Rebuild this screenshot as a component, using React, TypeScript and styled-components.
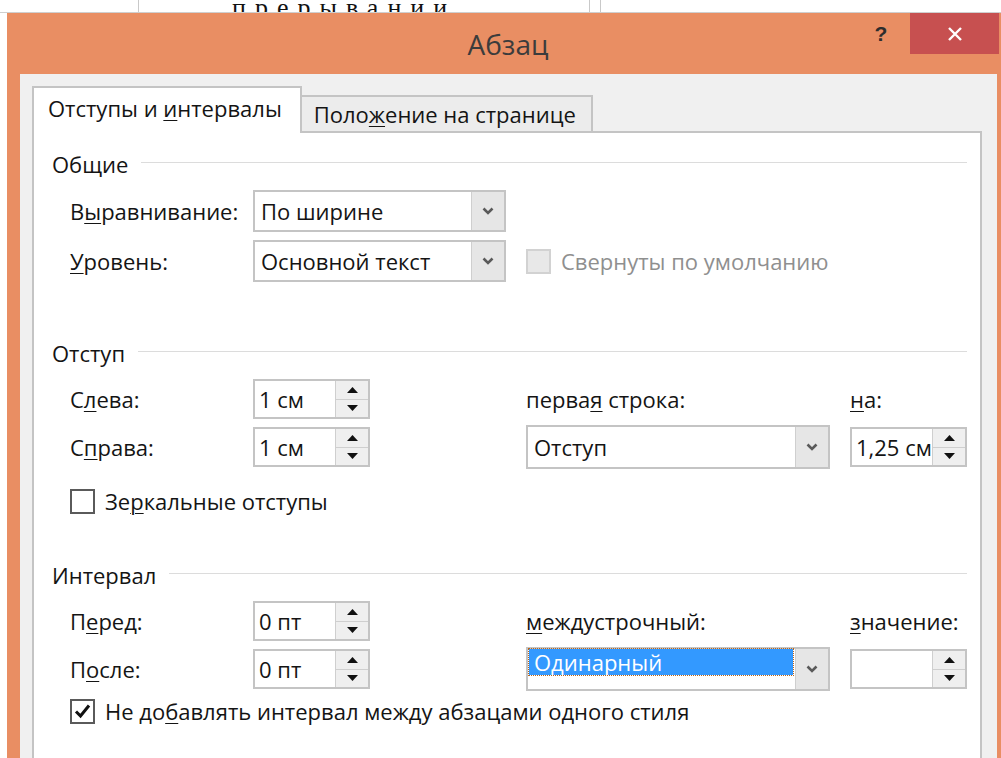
import React from "react";
import styled, { createGlobalStyle } from "styled-components";

const GlobalStyle = createGlobalStyle`
  html, body {
    margin: 0;
    padding: 0;
    background: #ffffff;
  }
  body {
    width: 1001px;
    height: 758px;
    overflow: hidden;
    font-family: "Segoe UI", "Open Sans", "Noto Sans", sans-serif;
    color: #141414;
  }
`;

const Page = styled.div`
  display: flex;
  flex-direction: column;
  height: 758px;
`;

// strip of the document that peeks out above the dialog
const DocStrip = styled.div`
  position: relative;
  height: 12px;
  overflow: hidden;
  border-bottom: 1px solid #cfcfcf;
`;

const DocLine = styled.div`
  position: absolute;
  left: 232px;
  bottom: -11px;
  font-family: "Liberation Serif", serif;
  font-size: 26px;
  letter-spacing: 9px;
  color: #111;
  white-space: nowrap;
`;

const DocRule = styled.div<{ $x: number }>`
  position: absolute;
  top: 0;
  bottom: 0;
  left: ${(p) => p.$x}px;
  width: 1px;
  background: #c9c9c9;
`;

const Window = styled.div`
  flex: 1;
  display: flex;
  flex-direction: column;
  margin-left: 7px;
  background: #e98e63;
`;

const TitleBar = styled.div`
  display: grid;
  grid-template-columns: 1fr auto 1fr;
  height: 61px;
`;

const Title = styled.div`
  grid-column: 2;
  padding: 12px 0 0 8px;
  font-size: 28px;
  color: #3c3c3c;
`;

const Controls = styled.div`
  grid-column: 3;
  justify-self: end;
  display: flex;
  align-items: flex-start;
  margin-right: 2px;
`;

const HelpButton = styled.div`
  width: 42px;
  height: 41px;
  display: flex;
  align-items: center;
  justify-content: center;
  font-family: "Liberation Sans", sans-serif;
  font-weight: bold;
  font-size: 21px;
  color: #2d2d2d;
  margin-right: 8px;
`;

const CloseButton = styled.div`
  width: 89px;
  height: 41px;
  display: flex;
  align-items: center;
  justify-content: center;
  background: #c75050;
`;

const Body = styled.div`
  flex: 1;
  display: flex;
  flex-direction: column;
  margin: 0 4px 0 13px;
  padding: 14px 15px 0 12px;
  background: #f0f0f0;
`;

const Tabs = styled.div`
  display: flex;
  align-items: flex-end;
  height: 45px;
  margin-bottom: -2px;
  position: relative;
  z-index: 1;
`;

const Tab = styled.div<{ $active?: boolean }>`
  box-sizing: border-box;
  display: flex;
  align-items: center;
  height: ${(p) => (p.$active ? 47 : 38)}px;
  padding: ${(p) => (p.$active ? "0 18px 6px 14px" : "0 15px 0 12px")};
  margin-left: ${(p) => (p.$active ? 0 : -2)}px;
  border: 2px solid #c4c4c4;
  border-bottom: ${(p) => (p.$active ? "none" : "2px solid #c4c4c4")};
  background: ${(p) => (p.$active ? "#ffffff" : "#ececec")};
  font-size: 22px;
  white-space: nowrap;
`;

const TabPanel = styled.div`
  flex: 1;
  background: #ffffff;
  border: 2px solid #c4c4c4;
  border-bottom: none;
  padding: 18px 13px 0 18px;
`;

const Section = styled.section<{ $gap: number }>`
  margin-top: ${(p) => p.$gap}px;
`;

const Legend = styled.div`
  display: flex;
  align-items: center;
  gap: 13px;
  height: 26px;
  font-size: 22px;
  &::after {
    content: "";
    flex: 1;
    height: 1px;
    margin-top: -3px;
    background: #dcdcdc;
  }
`;

const Grid = styled.div<{ $rowGap: number }>`
  display: grid;
  grid-template-columns: 183px 273px 324px 117px;
  align-items: center;
  padding-left: 18px;
  margin-top: 13px;
  row-gap: ${(p) => p.$rowGap}px;
`;

const Label = styled.span<{ $muted?: boolean }>`
  font-size: 22px;
  line-height: 28px;
  color: ${(p) => (p.$muted ? "#8f8f8f" : "#141414")};
  white-space: nowrap;
`;

const Key = styled.u`
  text-underline-offset: 3px;
  text-decoration-thickness: 1px;
`;

const SelectBox = styled.div<{ $width: number; $height: number }>`
  box-sizing: border-box;
  display: flex;
  width: ${(p) => p.$width}px;
  height: ${(p) => p.$height}px;
  border: 2px solid #c4c4c4;
  background: #ffffff;
`;

const SelectValue = styled.div`
  flex: 1;
  display: flex;
  align-items: center;
  padding: 0 2px 0 6px;
  font-size: 22px;
  white-space: nowrap;
`;

const Highlight = styled.div`
  flex: 1;
  display: flex;
  align-items: center;
  height: 26px;
  margin: 0 2px 0 1px;
  padding-left: 5px;
  background: #3399ff;
  color: #ffffff;
  outline: 1px dotted #b8661e;
  font-size: 22px;
`;

const DropButton = styled.div`
  width: 32px;
  display: flex;
  align-items: center;
  justify-content: center;
  background: #e6e6e6;
  border-left: 1px solid #cfcfcf;
`;

const SpinBox = styled.div<{ $width: number }>`
  box-sizing: border-box;
  display: flex;
  width: ${(p) => p.$width}px;
  height: 40px;
  border: 2px solid #c4c4c4;
  background: #ffffff;
`;

const SpinValue = styled.div`
  flex: 1;
  display: flex;
  align-items: center;
  padding-left: 4px;
  font-size: 22px;
  white-space: nowrap;
  overflow: hidden;
`;

const Spinner = styled.div`
  width: 32px;
  display: flex;
  flex-direction: column;
  border-left: 1px solid #cfcfcf;
`;

const SpinHalf = styled.div<{ $down?: boolean }>`
  flex: 1;
  display: flex;
  align-items: center;
  justify-content: center;
  background: #efefef;
  border-top: ${(p) => (p.$down ? "1px solid #cfcfcf" : "none")};
`;

const CheckRow = styled.label<{ $span?: boolean; $offset: number }>`
  display: flex;
  align-items: center;
  gap: 10px;
  grid-column: ${(p) => (p.$span ? "1 / -1" : "auto")};
  margin-top: ${(p) => p.$offset}px;
`;

const Box = styled.span<{ $disabled?: boolean }>`
  box-sizing: border-box;
  width: 25px;
  height: 25px;
  display: flex;
  align-items: center;
  justify-content: center;
  border: 2px solid ${(p) => (p.$disabled ? "#d2d2d2" : "#5a5a5a")};
  background: ${(p) => (p.$disabled ? "#e8e8e8" : "#ffffff")};
`;

const Chevron = () => (
  <svg width="12" height="8" viewBox="0 0 12 8">
    <polyline points="1.5,1.5 6,6 10.5,1.5" fill="none" stroke="#5a5a5a" strokeWidth="2.6" />
  </svg>
);

const Triangle = ({ down }: { down?: boolean }) => (
  <svg width="11" height="6" viewBox="0 0 11 6">
    <polygon points={down ? "0,0 11,0 5.5,6" : "5.5,0 11,6 0,6"} fill="#111" />
  </svg>
);

const Select = ({
  width,
  height = 42,
  selected,
  children,
}: {
  width: number;
  height?: number;
  selected?: boolean;
  children?: React.ReactNode;
}) => (
  <SelectBox $width={width} $height={height}>
    {selected ? <Highlight>{children}</Highlight> : <SelectValue>{children}</SelectValue>}
    <DropButton>
      <Chevron />
    </DropButton>
  </SelectBox>
);

const Spin = ({ width = 117, value }: { width?: number; value?: string }) => (
  <SpinBox $width={width}>
    <SpinValue>{value}</SpinValue>
    <Spinner>
      <SpinHalf>
        <Triangle />
      </SpinHalf>
      <SpinHalf $down>
        <Triangle down />
      </SpinHalf>
    </Spinner>
  </SpinBox>
);

const Check = ({
  checked,
  disabled,
  span,
  offset = 0,
  children,
}: {
  checked?: boolean;
  disabled?: boolean;
  span?: boolean;
  offset?: number;
  children: React.ReactNode;
}) => (
  <CheckRow $span={span} $offset={offset}>
    <Box $disabled={disabled}>
      {checked && (
        <svg width="17" height="16" viewBox="0 0 17 16">
          <polyline points="2,8.5 6.5,13 15,2.5" fill="none" stroke="#111" strokeWidth="3" />
        </svg>
      )}
    </Box>
    <Label $muted={disabled}>{children}</Label>
  </CheckRow>
);

const App = () => (
  <Page>
    <GlobalStyle />
    <DocStrip>
      <DocLine>прерывании</DocLine>
      <DocRule $x={138} />
      <DocRule $x={589} />
      <DocRule $x={600} />
    </DocStrip>
    <Window>
      <TitleBar>
        <Title>Абзац</Title>
        <Controls>
          <HelpButton>?</HelpButton>
          <CloseButton>
            <svg width="16" height="16" viewBox="0 0 16 16">
              <path d="M2 2 L14 14 M14 2 L2 14" stroke="#fff" strokeWidth="2.4" />
            </svg>
          </CloseButton>
        </Controls>
      </TitleBar>
      <Body>
        <Tabs>
          <Tab $active>
            Отступы и&nbsp;<Key>и</Key>нтервалы
          </Tab>
          <Tab>
            Поло<Key>ж</Key>ение на странице
          </Tab>
        </Tabs>
        <TabPanel>
          <Section $gap={0}>
            <Legend>Общие</Legend>
            <Grid $rowGap={8}>
              <Label>
                В<Key>ы</Key>равнивание:
              </Label>
              <Select width={253}>По ширине</Select>
              <span />
              <span />
              <Label>
                <Key>У</Key>ровень:
              </Label>
              <Select width={253}>Основной текст</Select>
              <Check disabled>Свернуты по умолчанию</Check>
            </Grid>
          </Section>

          <Section $gap={58}>
            <Legend>Отступ</Legend>
            <Grid $rowGap={6}>
              <Label>
                С<Key>л</Key>ева:
              </Label>
              <Spin value="1 см" />
              <Label>
                перва<Key>я</Key> строка:
              </Label>
              <Label>
                <Key>н</Key>а:
              </Label>
              <Label>
                С<Key>п</Key>рава:
              </Label>
              <Spin value="1 см" />
              <Select width={304} height={44}>
                Отступ
              </Select>
              <Spin value="1,25 см" />
              <Check span offset={12}>
                Зе<Key>р</Key>кальные отступы
              </Check>
            </Grid>
          </Section>

          <Section $gap={47}>
            <Legend>Интервал</Legend>
            <Grid $rowGap={6}>
              <Label>
                П<Key>е</Key>ред:
              </Label>
              <Spin value="0 пт" />
              <Label>
                <Key>м</Key>еждустрочный:
              </Label>
              <Label>
                <Key>з</Key>начение:
              </Label>
              <Label>
                П<Key>о</Key>сле:
              </Label>
              <Spin value="0 пт" />
              <Select width={304} height={44} selected>
                Одинарный
              </Select>
              <Spin value="" />
              <Check checked span offset={0}>
                Не до<Key>б</Key>авлять интервал между абзацами одного стиля
              </Check>
            </Grid>
          </Section>
        </TabPanel>
      </Body>
    </Window>
  </Page>
);

export default App;
